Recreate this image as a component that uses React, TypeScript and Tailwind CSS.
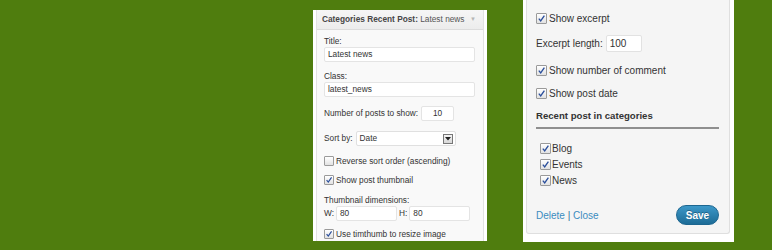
import React from "react";

const font = { fontFamily: '"Liberation Sans", Arial, sans-serif' };

function Check({ checked, size = 10 }: { checked: boolean; size?: number }) {
  return (
    <span
      className="inline-flex shrink-0 items-center justify-center rounded-[1px] border border-[#9a9a9a] bg-gradient-to-b from-white to-[#e2e2e2]"
      style={{ width: size, height: size }}
    >
      {checked && (
        <svg width={size - 2} height={size - 2} viewBox="0 0 10 10">
          <path d="M2 5.2 L4.1 7.6 L8.2 1.8" fill="none" stroke="#2b4f9c" strokeWidth="1.5" />
        </svg>
      )}
    </span>
  );
}

export default function App() {
  return (
    <div className="w-[772px] h-[250px] bg-[#4f7d0e] flex items-start overflow-hidden" style={font}>
      {/* Left widget */}
      <div className="ml-[313px] mt-[10px] w-[174px] h-[231px] bg-white px-[3px] overflow-hidden">
        <div className="h-full border-x border-[#e2e2e2] bg-[#f9f9f9] text-[#333] text-[8.3px]">
          <div className="h-[20px] flex items-center justify-between pl-[5px] pr-[7px] bg-gradient-to-b from-[#f6f6f6] to-[#ececec] border-b border-[#dcdcdc]">
            <span className="text-[#464646]">
              <b>Categories Recent Post:</b> <span className="text-[#555]">Latest news</span>
            </span>
            <span className="text-[6px] text-[#b5b5b5]">▼</span>
          </div>
          <div className="flex flex-col pl-[7px] pr-[8px]">
            <div className="mt-[6px] h-[10px] leading-[10px]">Title:</div>
            <div className="mt-[1px] h-[15px] bg-white border border-[#e4e4e4] rounded-[2px] flex items-center pl-[3px] text-[#333]">Latest news</div>
            <div className="mt-[9px] h-[10px] leading-[10px]">Class:</div>
            <div className="mt-[1px] h-[15px] bg-white border border-[#e4e4e4] rounded-[2px] flex items-center pl-[3px]">latest_news</div>
            <div className="mt-[9px] h-[15px] flex items-center">
              <span>Number of posts to show:</span>
              <div className="ml-[3px] w-[33px] h-[15px] bg-white border border-[#e4e4e4] rounded-[2px] flex items-center justify-center">10</div>
            </div>
            <div className="mt-[10px] h-[15px] flex items-center">
              <span>Sort by:</span>
              <div className="ml-[3px] w-[100px] h-[15px] bg-white border border-[#e0e0e0] rounded-[2px] flex items-center justify-between pl-[3px] pr-[2px]">
                <span>Date</span>
                <span className="w-[10px] h-[10px] border border-[#777] bg-gradient-to-b from-[#f4f4f4] to-[#d8d8d8] flex items-center justify-center">
                  <svg width="6" height="4" viewBox="0 0 6 4"><path d="M0 0 H6 L3 3.5 Z" fill="#222" /></svg>
                </span>
              </div>
            </div>
            <div className="mt-[10px] h-[10px] flex items-center gap-[2px]">
              <Check checked={false} size={10} />
              <span>Reverse sort order (ascending)</span>
            </div>
            <div className="mt-[9px] h-[10px] flex items-center gap-[2px]">
              <Check checked size={10} />
              <span>Show post thumbnail</span>
            </div>
            <div className="mt-[10px] h-[10px] leading-[10px]">Thumbnail dimensions:</div>
            <div className="mt-[1px] h-[15px] flex items-center">
              <span>W:</span>
              <div className="ml-[2px] w-[61px] h-[15px] bg-white border border-[#e4e4e4] rounded-[2px] flex items-center pl-[3px]">80</div>
              <span className="ml-[2px]">H:</span>
              <div className="ml-[2px] w-[61px] h-[15px] bg-white border border-[#e4e4e4] rounded-[2px] flex items-center pl-[3px]">80</div>
            </div>
            <div className="mt-[8px] h-[10px] flex items-center gap-[2px]">
              <Check checked size={10} />
              <span>Use timthumb to resize image</span>
            </div>
          </div>
        </div>
      </div>

      {/* Right widget */}
      <div className="ml-[36px] w-[211px] h-[242px] bg-white pl-[3px] pr-[4px] pb-[8px]">
        <div className="h-full border-x border-b border-[#dfdfdf] rounded-b-[3px] bg-[#f5f5f5] pl-[9px] pr-[10px] flex flex-col text-[10px] text-[#333]">
          <div className="mt-[12px] h-[12px] flex items-center gap-[2px]">
            <Check checked size={11} />
            <span>Show excerpt</span>
          </div>
          <div className="mt-[11px] h-[17px] flex items-center">
            <span>Excerpt length:</span>
            <div className="ml-[3px] w-[36px] h-[17px] bg-white border border-[#e2e2e2] rounded-[2px] flex items-center pl-[3px]">100</div>
          </div>
          <div className="mt-[12px] h-[12px] flex items-center gap-[2px]">
            <Check checked size={11} />
            <span>Show number of comment</span>
          </div>
          <div className="mt-[11px] h-[12px] flex items-center gap-[2px]">
            <Check checked size={11} />
            <span>Show post date</span>
          </div>
          <div className="mt-[11px] h-[12px] leading-[12px] font-bold text-[9.6px] text-[#333]">Recent post in categories</div>
          <div className="mt-[5px] h-[2px] bg-[#8f8f8f]" />
          <div className="pl-[4px] flex flex-col">
            <div className="mt-[13px] h-[12px] flex items-center gap-[1px]">
              <Check checked size={11} />
              <span>Blog</span>
            </div>
            <div className="mt-[4px] h-[12px] flex items-center gap-[1px]">
              <Check checked size={11} />
              <span>Events</span>
            </div>
            <div className="mt-[4px] h-[12px] flex items-center gap-[1px]">
              <Check checked size={11} />
              <span>News</span>
            </div>
          </div>
          <div className="mt-[19px] h-[20px] flex items-center justify-between">
            <span className="text-[#3a8cbf]">
              Delete <span className="text-[#2c6f98]">|</span> Close
            </span>
            <span className="w-[43px] h-[20px] rounded-full border border-[#1c6690] bg-gradient-to-b from-[#3c98c8] to-[#1d6c97] text-white flex items-center justify-center text-[10px] font-bold [text-shadow:0_-1px_0_rgba(0,0,0,0.3)]">
              Save
            </span>
          </div>
        </div>
      </div>
    </div>
  );
}
